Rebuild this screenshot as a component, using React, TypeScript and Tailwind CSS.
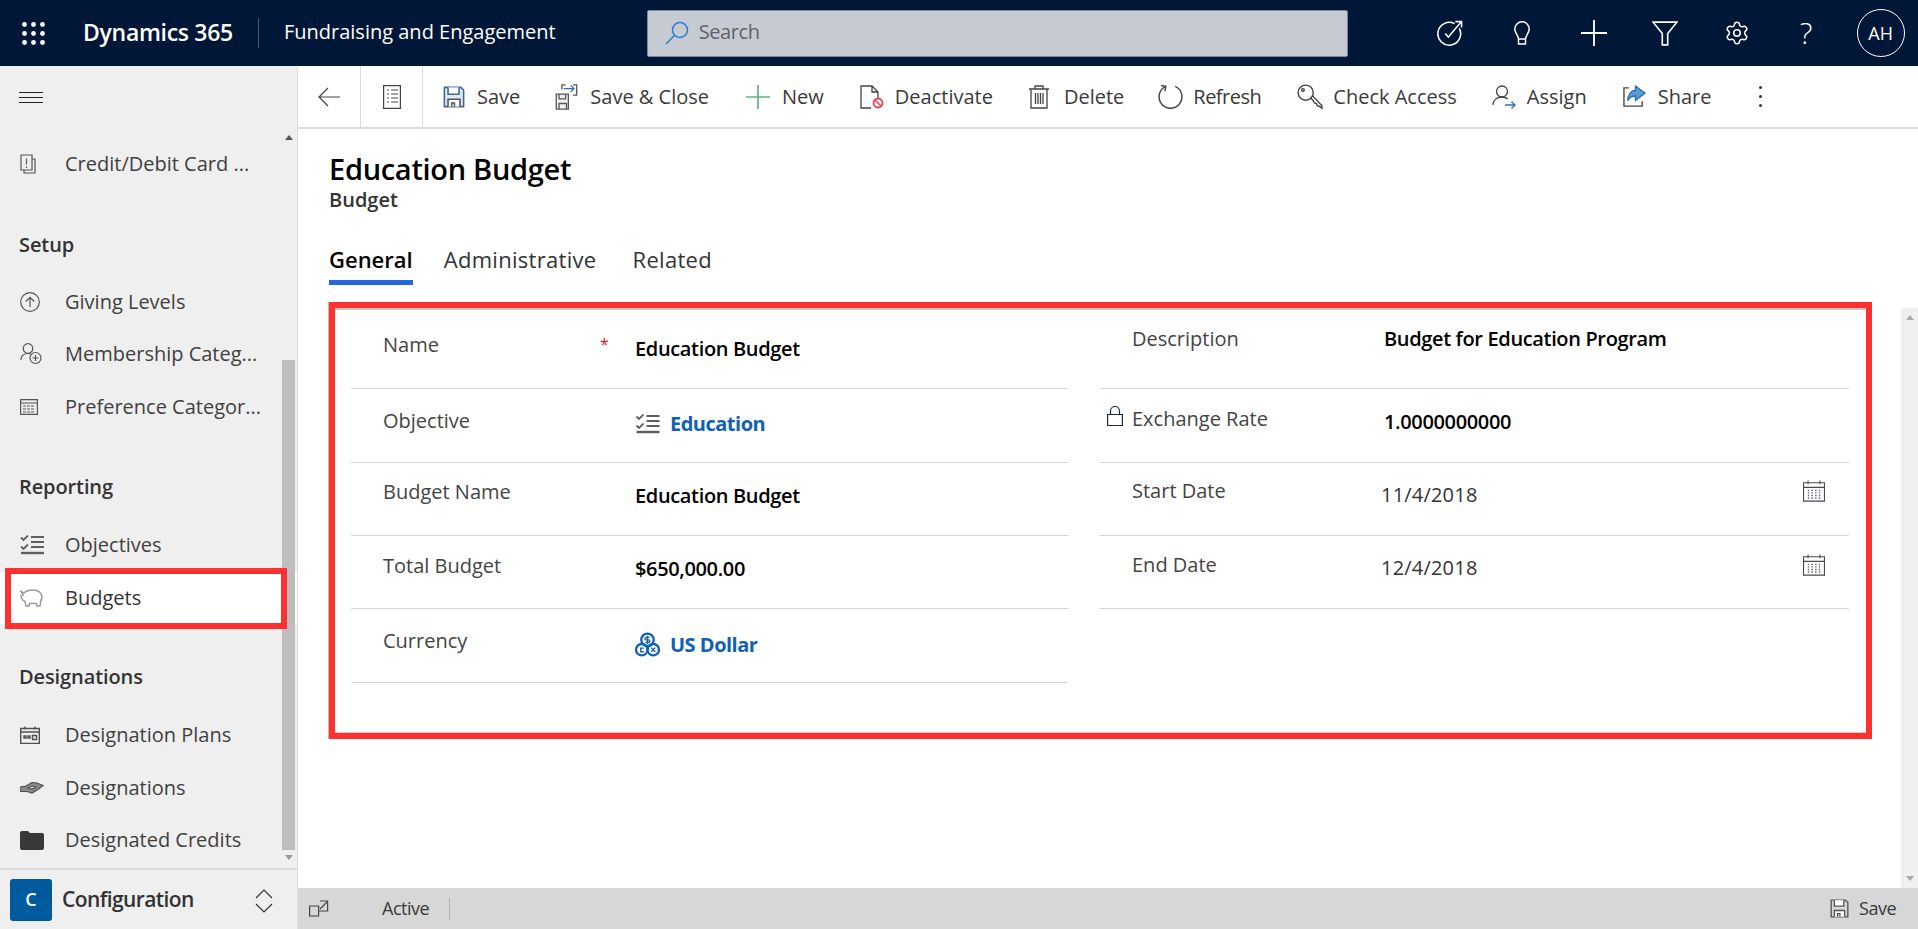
import type { ReactNode } from "react";
import { Settings } from "lucide-react";

type IconProps = { className?: string };

function Svg({ className, children }: IconProps & { children: ReactNode }) {
  return (
    <svg viewBox="0 0 24 24" fill="none" stroke="currentColor" strokeWidth="1.3" className={className}>
      {children}
    </svg>
  );
}

const GridIcon = ({ className }: IconProps) => (
  <svg viewBox="0 0 23 23" fill="white" className={className}>
    {[2.5, 11.5, 20.5].map((y) =>
      [2.5, 11.5, 20.5].map((x) => <circle key={`${x}-${y}`} cx={x} cy={y} r="2.4" />)
    )}
  </svg>
);

const SearchIcon = ({ className }: IconProps) => (
  <Svg className={className}>
    <circle cx="15" cy="9" r="7.5" strokeWidth="1.6" />
    <path d="M9.6 14.2 1 23" strokeWidth="1.6" />
  </Svg>
);

const GoalIcon = ({ className }: IconProps) => (
  <Svg className={className}>
    <path d="M20.6 7.8A10.5 10.5 0 1 1 16.2 3.4" strokeWidth="1.4" />
    <path d="M7.5 12.5l3 3.2L22.5 1.5M17 1.5h5.7v5.5" strokeWidth="1.4" />
  </Svg>
);

const BulbIcon = ({ className }: IconProps) => (
  <Svg className={className}>
    <path d="M8.5 18c0-4-3.7-5.500-3.700-10a7.200 7.200 0 0 1 14.400 0c0 4.500-3.700 6-3.700 10zM8.500 18v5h7v-5" strokeWidth="1.5" />
  </Svg>
);

const FunnelIcon = ({ className }: IconProps) => (
  <Svg className={className}>
    <path d="M1 2h22l-8.500 10.500V23h-5V12.500z" strokeWidth="1.5" />
  </Svg>
);

const FloppyIcon = ({ className, fill = "#dfe8f3", stroke = "#3f6797" }: IconProps & { fill?: string; stroke?: string }) => (
  <svg viewBox="0 0 24 24" className={className} fill="none" stroke={stroke} strokeWidth="1.7">
    <path d="M1.500 1.500h18l3 3v18h-21z" fill={fill} />
    <path d="M5.500 1.500v7.500h12V1.500" fill="white" />
    <path d="M5.500 22.500v-8h13v8" fill="white" stroke="#555" />
    <path d="M9.500 22.500v-4h3v4" stroke="#555" />
  </svg>
);

const SaveCloseIcon = ({ className }: IconProps) => (
  <svg viewBox="0 0 24 28" className={className} fill="none" strokeWidth="1.4">
    <path d="M1 11h13v16H1z" stroke="#555" fill="#eef2f7" />
    <path d="M4 11v5h7v-5M4 27v-6h8v6" stroke="#555" />
    <path d="M7 6V1h4M19 1h4v11h-4" stroke="#555" />
    <path d="M9 5h11M16.500 1.500 20 5l-3.500 3.500" stroke="#2b6fb5" />
  </svg>
);

const PlusIcon = ({ className }: IconProps) => (
  <Svg className={className}>
    <path d="M12 0v24M0 12h24" strokeWidth="1.7" />
  </Svg>
);

const DeactivateIcon = ({ className }: IconProps) => (
  <svg viewBox="0 0 24 24" className={className} fill="none" strokeWidth="1.300">
    <path d="M11 23H1V1h11l6 6v6M12 1v6h6" stroke="#444" />
    <circle cx="18" cy="18" r="4.500" stroke="#e8434b" strokeWidth="1.800" fill="white" />
    <path d="m15 15 6 6" stroke="#e8434b" strokeWidth="1.600" />
  </svg>
);

const TrashIcon = ({ className }: IconProps) => (
  <svg viewBox="0 0 20 24" fill="none" stroke="currentColor" strokeWidth="1.300" className={className}>
    <path d="M0 4h20M6 4V1h8v3M2 4v19h16V4M6.500 8v11M9 8v11M11.500 8v11M14 8v11" />
  </svg>
);

const RefreshIcon = ({ className }: IconProps) => (
  <Svg className={className}>
    <path d="M16.500 2.300A11 11 0 1 1 7.500 2.300" strokeWidth="1.400" />
    <path d="M7.500 7V2.200H2.800" strokeWidth="1.400" transform="rotate(10 7.500 2.200)" />
  </Svg>
);

const KeyIcon = ({ className }: IconProps) => (
  <Svg className={className}>
    <circle cx="8" cy="8" r="7" />
    <circle cx="5.500" cy="5.500" r="1.200" />
    <path d="M12.500 13 15 15.500l1 2 2 .500.500 2 2 .500 2.500 2V20L14 10.500" />
  </Svg>
);

const AssignIcon = ({ className }: IconProps) => (
  <svg viewBox="0 0 24 24" className={className} fill="none" strokeWidth="1.300">
    <circle cx="10" cy="6.500" r="5.500" stroke="#444" />
    <path d="M1 20c0-5 4-8 9-8 2.500 0 4.500.700 6 2" stroke="#444" />
    <path d="M13 20h10M19.500 16.500 23 20l-3.500 3.500" stroke="#2b6fb5" />
  </svg>
);

const ShareIcon = ({ className }: IconProps) => (
  <svg viewBox="0 0 24 24" className={className} fill="none" strokeWidth="1.400">
    <path d="M6 3H1v19h19v-5" stroke="#444" />
    <path d="M13 1l10 7.500L13 16v-4.500c-4 0-6.500 1.500-8 5 0-6 3-10.500 8-11z" fill="#5b9bd5" stroke="#2b6fb5" />
  </svg>
);

const CalendarIcon = ({ className }: IconProps) => (
  <svg viewBox="0 0 24 24" className={className} fill="none" stroke="#4a4a4a" strokeWidth="1.200">
    <path d="M.600 3h22.800v20H.600zM.600 8h22.800M5.500.500v4M18.500.500v4" />
    <path
      d="M6 10.500v10M10 10.500v10M14 10.500v10M18 10.500v10"
      stroke="#5a5a7a"
      strokeWidth="1.500"
      strokeDasharray="1.500 1.300"
    />
  </svg>
);

const LockIcon = ({ className }: IconProps) => (
  <svg viewBox="0 0 16 20" className={className} fill="none" stroke="#1d2740" strokeWidth="1.200">
    <path d="M.600 8.500h14.800v11H.600zM3.500 8.500V5a4.500 4.500 0 0 1 9 0v3.500" />
  </svg>
);

const ChecklistIcon = ({ className }: IconProps) => (
  <svg viewBox="0 0 24 20" className={className} fill="none" stroke="#5f5f5f">
    <path d="M1 2.500 3.500 5 8 .500M1 11.500 3.500 14 8 9.500" strokeWidth="1.800" />
    <path d="M11 2h13M11 7h13M11 12h13" strokeWidth="1.800" />
    <path d="M1 18h23" strokeWidth="2.400" />
  </svg>
);

const CurrencyIcon = ({ className }: IconProps) => (
  <svg viewBox="0 0 24 24" className={className} fill="none" stroke="#1160b7" strokeWidth="2.200">
    <circle cx="12" cy="7.500" r="6" />
    <circle cx="6.500" cy="17" r="5.500" />
    <circle cx="17.500" cy="17" r="5.500" />
    <path d="M14 5.200h-3.200a1.200 1.200 0 0 0 0 2.400h2.200a1.200 1.200 0 0 1 0 2.400H10M12 3.500v8" strokeWidth="1.300" />
    <path d="M8.500 15.500h-3v3.500h3M15.500 15l4 4M19.500 15l-4 4" strokeWidth="1.300" />
  </svg>
);

const navIcons: Record<string, ReactNode> = {
  card: (
    <svg viewBox="0 0 16 20" className="w-[16px] h-[20px]" fill="none" stroke="#555" strokeWidth="1.200">
      <path d="M1 1h11v15H1zM4 16v3h11V5h-3M6.500 4.500v6M6.500 12.500v1.500" />
    </svg>
  ),
  up: (
    <svg viewBox="0 0 20 20" className="w-[20px] h-[20px]" fill="none" stroke="#555" strokeWidth="1.200">
      <circle cx="10" cy="10" r="9.300" />
      <path d="M10 15V5.500M5.800 9.500 10 5.300l4.200 4.200" />
    </svg>
  ),
  member: (
    <svg viewBox="0 0 22 22" className="w-[22px] h-[22px]" fill="none" stroke="#555" strokeWidth="1.200">
      <circle cx="8" cy="5.500" r="4.800" />
      <path d="M.800 17c.500-4.500 3.500-6.500 7.200-6.500 1 0 2 .200 2.800.500" />
      <circle cx="15.500" cy="15" r="5.500" />
      <path d="M15.500 12v6M12.500 15h6" />
    </svg>
  ),
  table: (
    <svg viewBox="0 0 18 16" className="w-[18px] h-[16px]" fill="none" stroke="#555" strokeWidth="1.200">
      <path d="M.600.600h16.800v14.800H.600zM.600 4h16.800" />
      <path d="M3 7h12M3 10h12M3 13h12" strokeDasharray="3 1" />
    </svg>
  ),
  check: <ChecklistIcon className="w-[24px] h-[20px]" />,
  piggy: (
    <svg viewBox="0 0 24 20" className="w-[24px] h-[20px]" fill="none" stroke="#9a9a9a" strokeWidth="1.500">
      <path d="M1 3.500 4 5c2-2 5-3 9-3 5 0 9 3 9 7 0 1-.300 2-1 3 l-1 6h-3l-.500-2.500h-7L9 18H6l-1-4.500C3.500 13 2 11 1.500 10L1 8l2-1z" />
    </svg>
  ),
  cal: (
    <svg viewBox="0 0 20 18" className="w-[20px] h-[18px]" fill="none" stroke="#505050" strokeWidth="1.400">
      <path d="M.700 2.500h18.600v15H.700zM.700 6h18.600M5 .500v3M15 .500v3" />
      <path d="M4 10h2v2H4zM8 10h2v2H8zM12.500 9.500h4v4h-4z" />
    </svg>
  ),
  hand: (
    <svg viewBox="0 0 24 12" className="w-[24px] h-[12px]" fill="#8a8a8a" stroke="#505050" strokeWidth="1.200">
      <path d="M0 5l6-1 6-3.500 5 .500 6 2.500-5 4-6 3.500-5-1.500H0z" />
      <path d="M8 6c3-2 6-2 8-1-2 2-5 2.500-8 1z" fill="#eee" />
    </svg>
  ),
  folder: (
    <svg viewBox="0 0 24 20" className="w-[24px] h-[20px]" fill="#383838">
      <path d="M0 3q0-2 2-2h6l2 2h12q2 0 2 2v13q0 2-2 2H2q-2 0-2-2z" />
    </svg>
  ),
};

const navGroups = [
  {
    title: "",
    margins: "",
    items: [{ icon: "card", label: "Credit/Debit Card ..." }],
  },
  {
    title: "Setup",
    margins: "mt-[34px] mb-[11px]",
    items: [
      { icon: "up", label: "Giving Levels" },
      { icon: "member", label: "Membership Categ..." },
      { icon: "table", label: "Preference Categor..." },
    ],
  },
  {
    title: "Reporting",
    margins: "mt-[34px] mb-[12px]",
    items: [
      { icon: "check", label: "Objectives" },
      { icon: "piggy", label: "Budgets", active: true },
    ],
  },
  {
    title: "Designations",
    margins: "mt-[33px] mb-[12px]",
    items: [
      { icon: "cal", label: "Designation Plans" },
      { icon: "hand", label: "Designations" },
      { icon: "folder", label: "Designated Credits" },
    ],
  },
];

function Sidebar() {
  return (
    <aside className="w-[298px] shrink-0 bg-[#efefef] border-r border-[#dcdcdc] flex flex-col">
      <div className="h-[62px] shrink-0 pl-[19px] pt-[26px]">
        <div className="w-[24px] h-[11px] border-y border-[#222] relative">
          <div className="absolute left-0 right-0 top-[4px] h-px bg-[#222]" />
        </div>
      </div>

      <nav className="relative flex-1 pt-[10px]">
        {navGroups.map((group) => (
          <div key={group.title}>
            {group.title && (
              <h3 className={`${group.margins} h-[40px] leading-[40px] pl-[19px] text-[20px] font-semibold tracking-[-0.1px] text-[#333]`}>
                {group.title}
              </h3>
            )}
            {group.items.map((item) => (
              <div
                key={item.label}
                className={
                  item.active
                    ? "relative h-[52.5px] flex items-center bg-white text-[#333] text-[20px]"
                    : "h-[52.5px] flex items-center text-[#3f3f3f] text-[20px] w-[270px]"
                }
              >
                <span className="w-[65px] pl-[20px] shrink-0 flex items-center">{navIcons[item.icon]}</span>
                <span className="whitespace-nowrap">{item.label}</span>
                {item.active && (
                  <div className="absolute z-10 left-[5px] top-[-4px] w-[282px] h-[61px] border-[6px] border-[#ff3030]" />
                )}
              </div>
            ))}
          </div>
        ))}

        {/* scroll bar */}
        <div className="absolute left-[282px] top-[232px] w-[13px] h-[490px] bg-[#bdbdbd]" />
        <div className="absolute left-[285px] top-[7px] border-x-[4px] border-x-transparent border-b-[5px] border-b-[#555]" />
        <div className="absolute left-[285px] top-[727px] border-x-[4px] border-x-transparent border-t-[5px] border-t-[#999]" />
      </nav>

      <div className="h-[61px] shrink-0 border-t-2 border-[#dcdcdc] flex items-center pl-[10px] relative">
        <div className="w-[42px] h-[42px] rounded-[3px] bg-[#005a9e] text-white text-[18px] font-semibold flex items-center justify-center">
          C
        </div>
        <span className="ml-[10px] text-[21px] font-semibold tracking-[-0.6px] text-[#333]">Configuration</span>
        <svg viewBox="0 0 18 24" className="absolute left-[255px] top-[19px] w-[18px] h-[24px]" fill="none" stroke="#333" strokeWidth="1.200">
          <path d="M1 9l8-8 8 8M1 15l8 8 8-8" />
        </svg>
      </div>
    </aside>
  );
}

const commands = [
  { icon: <FloppyIcon className="w-[22px] h-[24px]" />, label: "Save", cls: "gap-[12px]" },
  { icon: <SaveCloseIcon className="w-[23px] h-[26px]" />, label: "Save & Close", cls: "gap-[12px] ml-[35px]" },
  { icon: <PlusIcon className="w-[24px] h-[24px] text-[#5cb77f]" />, label: "New", cls: "gap-[12px] ml-[37px]" },
  { icon: <DeactivateIcon className="w-[24px] h-[24px]" />, label: "Deactivate", cls: "gap-[11px] ml-[36px]" },
  { icon: <TrashIcon className="w-[20px] h-[24px] text-[#444]" />, label: "Delete", cls: "gap-[15px] ml-[36px]" },
  { icon: <RefreshIcon className="w-[25px] h-[25px] text-[#444]" />, label: "Refresh", cls: "gap-[10px] ml-[34px] tracking-[-0.5px]" },
  { icon: <KeyIcon className="w-[26px] h-[26px] text-[#444]" />, label: "Check Access", cls: "gap-[10px] ml-[36px]" },
  { icon: <AssignIcon className="w-[24px] h-[24px]" />, label: "Assign", cls: "gap-[11px] ml-[35px]" },
  { icon: <ShareIcon className="w-[23px] h-[23px]" />, label: "Share", cls: "gap-[12px] ml-[36px]" },
];

function CommandBar() {
  return (
    <div className="h-[63px] shrink-0 flex items-center border-b-2 border-[#dcdcdc] text-[20px] text-[#3a3a3a]">
      <div className="w-[63px] h-full flex items-center justify-center border-r border-[#dcdcdc]">
        <svg viewBox="0 0 22 20" className="w-[22px] h-[20px]" fill="none" stroke="#444" strokeWidth="1.200">
          <path d="M22 10H1M10 1l-9 9 9 9" />
        </svg>
      </div>
      <div className="w-[62px] h-full flex items-center justify-center border-r border-[#dcdcdc]">
        <svg viewBox="0 0 18 24" className="w-[18px] h-[24px]" fill="none" stroke="#444" strokeWidth="1.200">
          <path d="M.600.600h16.800v22.800H.600zM4 5h2M8 5h7M4 9h2M8 9h7M4 13h2M8 13h7M4 17h2M8 17h7" />
        </svg>
      </div>
      <div className="flex items-center pl-[20px]">
        {commands.map((c) => (
          <div key={c.label} className={`flex items-center ${c.cls}`}>
            {c.icon}
            <span className="whitespace-nowrap">{c.label}</span>
          </div>
        ))}
        <div className="ml-[48px] flex flex-col gap-[6px]">
          <span className="w-[3px] h-[3px] rounded-full bg-[#333]" />
          <span className="w-[3px] h-[3px] rounded-full bg-[#333]" />
          <span className="w-[3px] h-[3px] rounded-full bg-[#333]" />
        </div>
      </div>
    </div>
  );
}

function TopBar() {
  return (
    <header className="h-[66px] shrink-0 bg-[#001737] flex items-center text-white relative">
      <GridIcon className="ml-[22px] w-[23px] h-[23px]" />
      <span className="ml-[38px] mb-[2px] text-[23px] font-semibold tracking-[-0.3px] whitespace-nowrap">Dynamics 365</span>
      <div className="ml-[25px] w-px h-[30px] bg-[#4a5a70]" />
      <span className="ml-[25px] mb-[2px] text-[20px] whitespace-nowrap">Fundraising and Engagement</span>
      <div className="ml-[91px] w-[701px] h-[47px] rounded-[2px] bg-[#c6cbd3] border border-[#7f8794] flex items-center pl-[17px] shrink-0">
        <SearchIcon className="w-[24px] h-[24px] text-[#2b7cd3]" />
        <span className="ml-[10px] mb-[2px] text-[20px] tracking-[-0.4px] text-[#5f6368]">Search</span>
      </div>
      <div className="ml-[89px] flex items-center">
        <GoalIcon className="w-[26px] h-[26px]" />
        <BulbIcon className="ml-[47px] w-[24px] h-[28px]" />
        <PlusIcon className="ml-[47px] w-[26px] h-[26px]" />
        <FunnelIcon className="ml-[45px] w-[26px] h-[26px]" />
        <Settings className="ml-[46px] w-[26px] h-[26px]" strokeWidth={1.4} />
        <span className="ml-[50px] w-[12px] text-[30px] font-light leading-none">?</span>
        <div className="ml-[45px] w-[48px] h-[48px] rounded-full border border-white flex items-center justify-center text-[18px]">
          AH
        </div>
      </div>
    </header>
  );
}

type Row = {
  label: string;
  value: ReactNode;
  height: string;
  labelPt: string;
  valuePt: string;
  lock?: boolean;
  end?: ReactNode;
};

const semi = "font-semibold text-black tracking-[-0.35px]";
const link = "font-bold text-[#1160b7] tracking-[-0.5px]";

const leftRows: Row[] = [
  { label: "Name", height: "h-[81px]", labelPt: "pt-[25px]", valuePt: "pt-[29px]", value: <span className={semi}>Education Budget</span> },
  {
    label: "Objective",
    height: "h-[74px]",
    labelPt: "pt-[20px]",
    valuePt: "pt-[23px]",
    value: (
      <span className="flex items-center gap-[10px]">
        <ChecklistIcon className="w-[25px] h-[20px]" />
        <span className={link}>Education</span>
      </span>
    ),
  },
  { label: "Budget Name", height: "h-[73px]", labelPt: "pt-[17px]", valuePt: "pt-[21px]", value: <span className={semi}>Education Budget</span> },
  { label: "Total Budget", height: "h-[73px]", labelPt: "pt-[18px]", valuePt: "pt-[21px]", value: <span className={semi}>$650,000.00</span> },
  {
    label: "Currency",
    height: "h-[74px]",
    labelPt: "pt-[20px]",
    valuePt: "pt-[23px]",
    value: (
      <span className="flex items-center gap-[10px]">
        <CurrencyIcon className="w-[25px] h-[25px]" />
        <span className={link}>US Dollar</span>
      </span>
    ),
  },
];

const rightRows: Row[] = [
  { label: "Description", height: "h-[81px]", labelPt: "pt-[19px]", valuePt: "pt-[19px]", value: <span className={semi}>Budget for Education Program</span> },
  { label: "Exchange Rate", lock: true, height: "h-[74px]", labelPt: "pt-[18px]", valuePt: "pt-[21px]", value: <span className={semi}>1.0000000000</span> },
  {
    label: "Start Date",
    height: "h-[73px]",
    labelPt: "pt-[16px]",
    valuePt: "pt-[20px]",
    value: <span className="-ml-[3px] tracking-[0.2px] text-[#333]">11/4/2018</span>,
    end: <CalendarIcon className="w-[24px] h-[22px] mt-[17px]" />,
  },
  {
    label: "End Date",
    height: "h-[73px]",
    labelPt: "pt-[17px]",
    valuePt: "pt-[20px]",
    value: <span className="-ml-[3px] tracking-[0.2px] text-[#333]">12/4/2018</span>,
    end: <CalendarIcon className="w-[24px] h-[22px] mt-[18px]" />,
  },
];

function FormRow({ row, required }: { row: Row; required?: boolean }) {
  return (
    <div className={`${row.height} border-b border-[#d8d8d8] flex text-[20px] leading-[24px]`}>
      <div className={`w-[284px] shrink-0 relative pl-[32px] text-[#444] ${row.labelPt}`}>
        {row.lock && <LockIcon className="absolute left-[7px] top-[17px] w-[16px] h-[20px]" />}
        {row.label}
        {required && <span className="absolute left-[249px] top-[24px] text-[#e81123] text-[16px]">*</span>}
      </div>
      <div className={`flex-1 ${row.valuePt}`}>{row.value}</div>
      {row.end && <div className="pr-[23px]">{row.end}</div>}
    </div>
  );
}

function Form() {
  return (
    <section className="mt-[17px] ml-[31px] w-[1543px] h-[437px] border-[6px] border-[#ff3030] flex gap-[32px] pl-[16px] pr-[17px] shadow-[-1px_0_0_#bbbbbb,inset_0_2px_0_#c8c8c8,inset_0_-1px_0_#c8c8c8]">
      <div className="w-[717px]">
        {leftRows.map((r) => (
          <FormRow key={r.label} row={r} required={r.label === "Name"} />
        ))}
      </div>
      <div className="flex-1">
        {rightRows.map((r) => (
          <FormRow key={r.label} row={r} />
        ))}
      </div>
    </section>
  );
}

function StatusBar() {
  return (
    <div className="h-[41px] shrink-0 bg-[#d7d7d7] flex items-center text-[18px] tracking-[-0.5px] text-[#3a3a3a]">
      <svg viewBox="0 0 20 17" className="ml-[11px] w-[20px] h-[17px]" fill="none" stroke="#444" strokeWidth="1.200">
        <path d="M.600 6h9v10H.600zM9.600 11h9V1M11 1h8M18.500 1.500 11 9" />
      </svg>
      <span className="ml-[53px]">Active</span>
      <div className="ml-[20px] w-px h-[22px] bg-[#b0b0b0]" />
      <div className="ml-auto mr-[22px] flex items-center gap-[10px]">
        <FloppyIcon className="w-[19px] h-[19px]" fill="none" stroke="#555" />
        <span>Save</span>
      </div>
    </div>
  );
}

export default function App() {
  return (
    <div className="w-[1918px] h-[929px] flex flex-col overflow-hidden bg-white font-['Open_Sans',sans-serif]">
      <TopBar />
      <div className="flex flex-1 min-h-0">
        <Sidebar />
        <main className="flex-1 min-w-0 flex flex-col">
          <CommandBar />
          <div className="flex-1 min-h-0 flex">
            <div className="flex-1 min-w-0">
              <div className="pl-[31px] pt-[21px]">
                <h1 className="text-[29px] leading-[38px] font-semibold tracking-[-0.3px] text-black">Education Budget</h1>
                <p className="text-[20px] leading-[24px] font-semibold text-[#333]">Budget</p>
                <div className="mt-[32px] flex text-[22px] leading-[30px] tracking-[0.3px] text-[#333]">
                  <span className="pb-[6px] border-b-[5px] border-[#2266e3] text-black font-semibold tracking-normal">General</span>
                  <span className="ml-[31px]">Administrative</span>
                  <span className="ml-[36px]">Related</span>
                </div>
              </div>
              <Form />
            </div>
            <div className="w-[17px] shrink-0 mt-[179px] bg-[#f0f0f0] relative">
              <div className="absolute left-[5px] top-[7px] border-x-[4px] border-x-transparent border-b-[5px] border-b-[#aaa]" />
              <div className="absolute left-[5px] bottom-[7px] border-x-[4px] border-x-transparent border-t-[5px] border-t-[#aaa]" />
            </div>
          </div>
          <StatusBar />
        </main>
      </div>
    </div>
  );
}
